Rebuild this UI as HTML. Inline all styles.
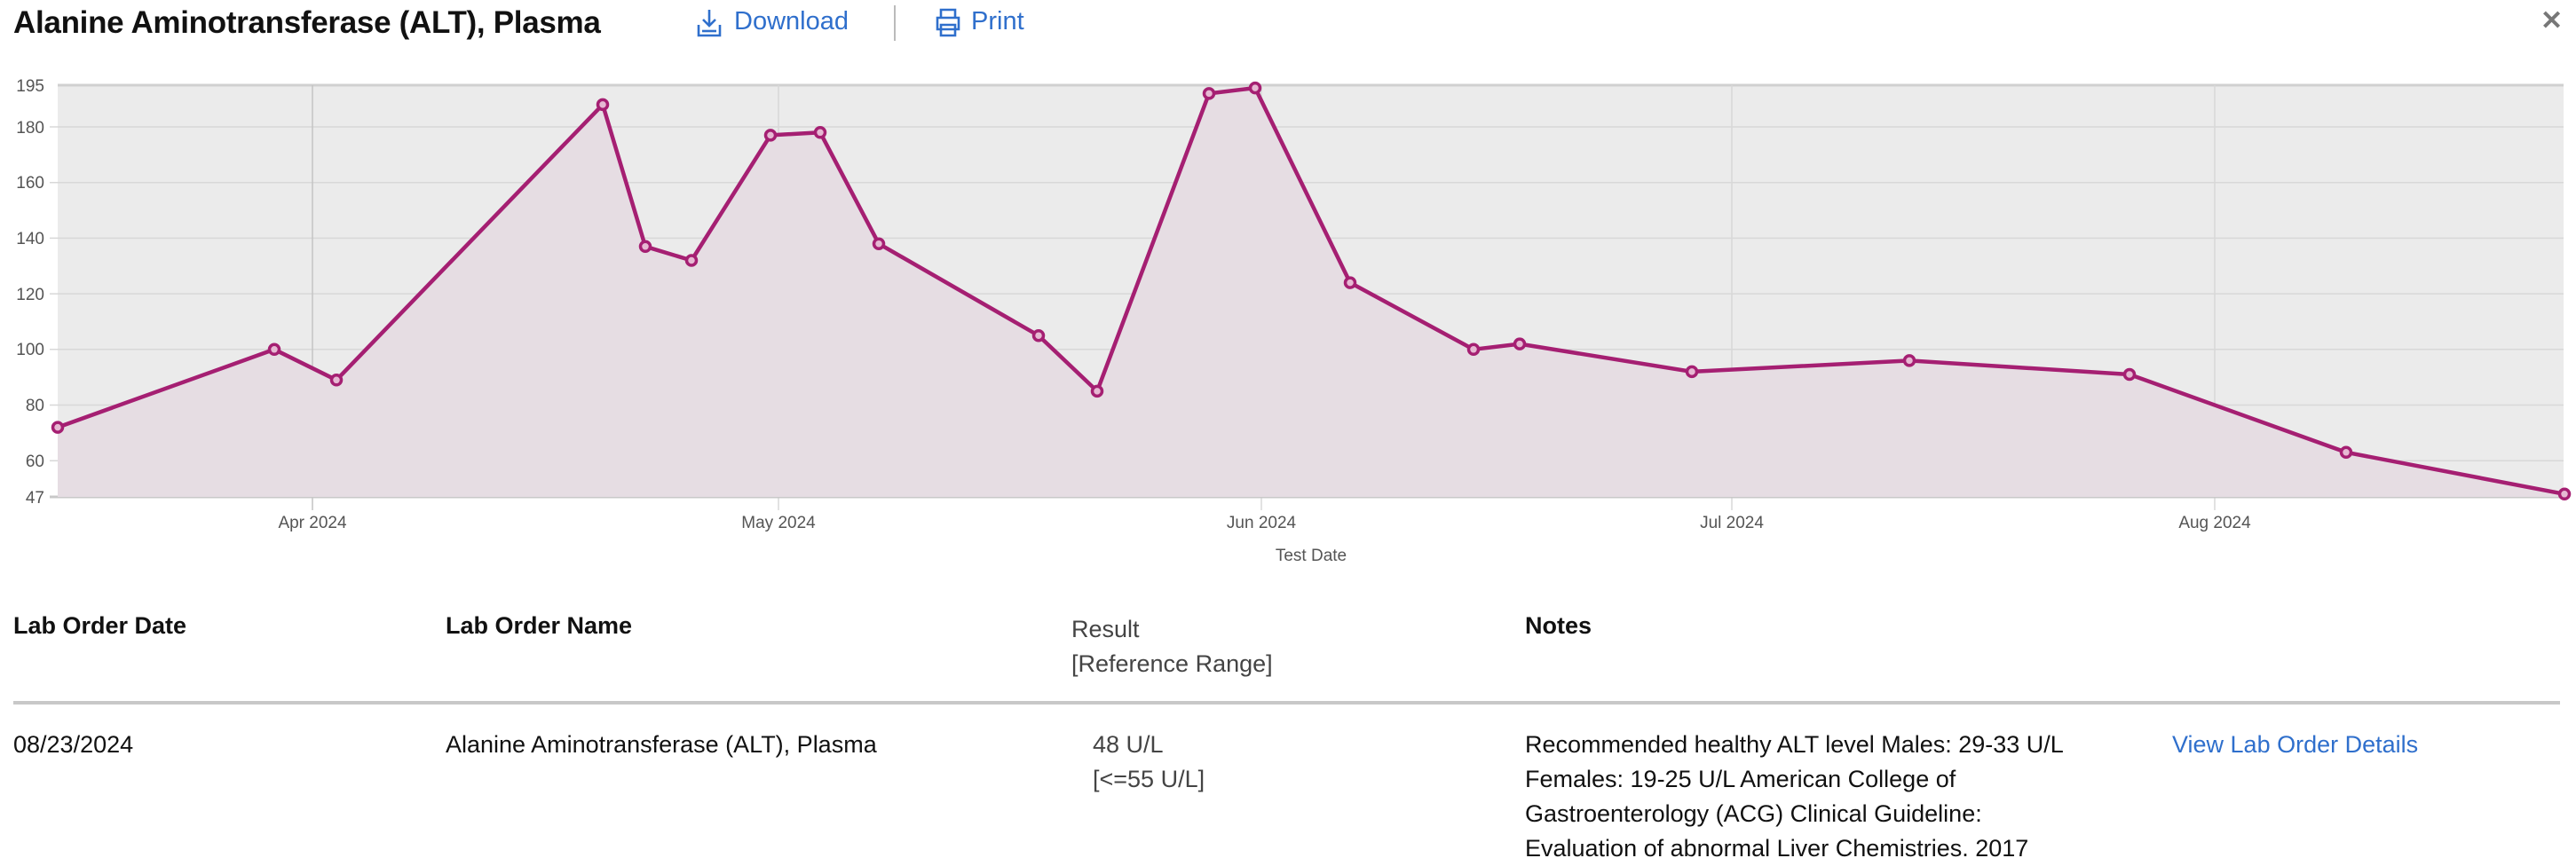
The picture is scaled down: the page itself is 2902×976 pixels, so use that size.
<!DOCTYPE html>
<html><head><meta charset="utf-8"><style>
html,body{margin:0;padding:0;background:#fff;width:2902px;height:972px;overflow:hidden;font-family:"Liberation Sans",sans-serif;}
.a{position:absolute;white-space:nowrap;}
.h{font-size:27px;color:#111;font-weight:bold;}
.t{font-size:27px;color:#111;line-height:39px;}
.blue{color:#2f6fcc;}
</style></head><body>
<div class="a" style="left:15px;top:6px;font-size:35px;color:#111;font-weight:bold;letter-spacing:-0.3px">Alanine Aminotransferase (ALT), Plasma</div>
<svg class="a" style="left:782px;top:8px" width="34" height="36" viewBox="0 0 34 36" fill="none" stroke="#2f6fcc" stroke-width="2.6"><path d="M17 3v18M10 14l7 7 7-7M5 20v12h24V20"/><path d="M9 27h16"/></svg>
<div class="a blue" style="left:827px;top:8px;font-size:29px">Download</div>
<div class="a" style="left:1007px;top:6px;width:2px;height:40px;background:#bbb"></div>
<svg class="a" style="left:1052px;top:8px" width="32" height="36" viewBox="0 0 32 36" fill="none" stroke="#2f6fcc" stroke-width="2.6"><path d="M8 12V3h16v9M4 12h24v13H4zM8 20v12h16V20z"/></svg>
<div class="a blue" style="left:1094px;top:8px;font-size:29px">Print</div>
<div class="a" style="left:2862px;top:6px;font-size:30px;color:#777;font-weight:bold">✕</div>

<svg class="a" style="left:0;top:0" width="2902" height="660">
<rect x="65" y="96" width="2823" height="464" fill="#ebebeb"/>
<g stroke="#d8d8d8" stroke-width="1.5">
<line x1="65" x2="2888" y1="96" y2="96" stroke="#d0d0d0" stroke-width="3"/>
<line x1="56" x2="2888" y1="143" y2="143"/><line x1="56" x2="2888" y1="205.7" y2="205.7"/>
<line x1="56" x2="2888" y1="268.4" y2="268.4"/><line x1="56" x2="2888" y1="331.1" y2="331.1"/>
<line x1="56" x2="2888" y1="393.8" y2="393.8"/><line x1="56" x2="2888" y1="456.5" y2="456.5"/>
<line x1="56" x2="2888" y1="519.2" y2="519.2"/>
<line x1="352" x2="352" y1="96" y2="575" stroke="#c4c4c4"/>
<line x1="877" x2="877" y1="96" y2="575"/><line x1="1421" x2="1421" y1="96" y2="575"/>
<line x1="1951" x2="1951" y1="96" y2="575"/><line x1="2495" x2="2495" y1="96" y2="575"/>
<line x1="56" x2="2888" y1="560" y2="560" stroke="#c8c8c8" stroke-width="3"/>
</g>
<polygon fill="#e6dde3" points="65,560 65,481.6 309,393.8 379,428.3 679,117.9 727,277.8 779,293.5 868,152.4 924,149.3 990,274.7 1170,378.2 1236,440.9 1362,105.4 1414,99.1 1521,318.6 1660,393.8 1712,387.6 1906,418.9 2151,406.4 2399,422 2643,509.8 2889,556.8 2889,560"/>
<polyline fill="none" stroke="#a51f72" stroke-width="4.5" stroke-linejoin="round" points="65,481.6 309,393.8 379,428.3 679,117.9 727,277.8 779,293.5 868,152.4 924,149.3 990,274.7 1170,378.2 1236,440.9 1362,105.4 1414,99.1 1521,318.6 1660,393.8 1712,387.6 1906,418.9 2151,406.4 2399,422 2643,509.8 2889,556.8"/>
<g fill="#e6b9d3" stroke="#a51f72" stroke-width="3.5">
<circle cx="65" cy="481.6" r="5.5"/><circle cx="309" cy="393.8" r="5.5"/><circle cx="379" cy="428.3" r="5.5"/><circle cx="679" cy="117.9" r="5.5"/><circle cx="727" cy="277.8" r="5.5"/><circle cx="779" cy="293.5" r="5.5"/><circle cx="868" cy="152.4" r="5.5"/><circle cx="924" cy="149.3" r="5.5"/><circle cx="990" cy="274.7" r="5.5"/><circle cx="1170" cy="378.2" r="5.5"/><circle cx="1236" cy="440.9" r="5.5"/><circle cx="1362" cy="105.4" r="5.5"/><circle cx="1414" cy="99.1" r="5.5"/><circle cx="1521" cy="318.6" r="5.5"/><circle cx="1660" cy="393.8" r="5.5"/><circle cx="1712" cy="387.6" r="5.5"/><circle cx="1906" cy="418.9" r="5.5"/><circle cx="2151" cy="406.4" r="5.5"/><circle cx="2399" cy="422" r="5.5"/><circle cx="2643" cy="509.8" r="5.5"/><circle cx="2889" cy="556.8" r="5.5"/>
</g>
<g font-family="Liberation Sans" font-size="19" fill="#555" text-anchor="end">
<text x="50" y="103">195</text><text x="50" y="150">180</text><text x="50" y="212">160</text><text x="50" y="275">140</text><text x="50" y="338">120</text><text x="50" y="400">100</text><text x="50" y="463">80</text><text x="50" y="526">60</text><text x="50" y="567">47</text>
</g>
<g font-family="Liberation Sans" font-size="19" fill="#555" text-anchor="middle">
<text x="352" y="595">Apr 2024</text><text x="877" y="595">May 2024</text><text x="1421" y="595">Jun 2024</text><text x="1951" y="595">Jul 2024</text><text x="2495" y="595">Aug 2024</text>
<text x="1477" y="632">Test Date</text>
</g>
</svg>

<div class="a h" style="left:15px;top:690px">Lab Order Date</div>
<div class="a h" style="left:502px;top:690px">Lab Order Name</div>
<div class="a" style="left:1207px;top:690px;font-size:27px;color:#444;line-height:39px">Result<br>[Reference Range]</div>
<div class="a h" style="left:1718px;top:690px">Notes</div>
<div class="a" style="left:15px;top:790px;width:2869px;height:4px;background:#c8c8c8"></div>
<div class="a t" style="left:15px;top:820px">08/23/2024</div>
<div class="a t" style="left:502px;top:820px">Alanine Aminotransferase (ALT), Plasma</div>
<div class="a t" style="left:1231px;top:820px;color:#444">48 U/L<br>[&lt;=55 U/L]</div>
<div class="a t" style="left:1718px;top:820px">Recommended healthy ALT level Males: 29-33 U/L<br>Females: 19-25 U/L American College of<br>Gastroenterology (ACG) Clinical Guideline:<br>Evaluation of abnormal Liver Chemistries. 2017</div>
<div class="a t blue" style="left:2447px;top:820px">View Lab Order Details</div>
</body></html>
